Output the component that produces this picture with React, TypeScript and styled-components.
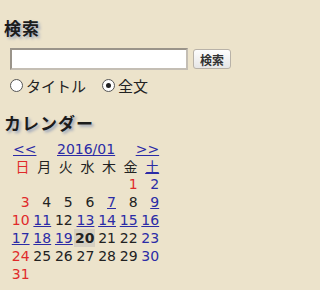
import React from 'react';
import styled, { createGlobalStyle } from 'styled-components';

const GlobalStyle = createGlobalStyle`
  html, body {
    margin: 0;
    padding: 0;
    background: #ece3cb;
  }
  body {
    font-family: "DejaVu Sans", "Noto Sans CJK JP", sans-serif;
    color: #222;
  }
`;

const Page = styled.div`
  width: 320px;
  height: 290px;
  padding: 16px 0 0 4px;
  box-sizing: border-box;
  background: #ece3cb;
`;

const Heading = styled.h2`
  margin: 0;
  font-family: "Noto Sans CJK JP", sans-serif;
  font-size: 17px;
  font-weight: bold;
  line-height: 24px;
  color: #1c1c1c;
  letter-spacing: 1px;
  text-shadow: 2px 2px 3px #9aa3b8;
`;

const SearchForm = styled.form`
  display: flex;
  flex-direction: column;
  padding: 8px 0 0 6px;
`;

const InputRow = styled.div`
  display: flex;
  align-items: center;
  gap: 5px;
`;

const TextInput = styled.input`
  width: 178px;
  height: 22px;
  box-sizing: border-box;
  border: 2px solid #9a948a;
  border-right-color: #c4beb4;
  border-bottom-color: #c4beb4;
  background: #fff;
  padding: 0 3px;
  margin: 0;
`;

const SearchButton = styled.button`
  height: 20px;
  width: 38px;
  padding: 0;
  margin: 0;
  border: 1px solid #b8b2a8;
  border-radius: 3px;
  background: linear-gradient(#fdfdfd, #e6e6e6);
  font-family: "Noto Sans CJK JP", sans-serif;
  font-size: 12px;
  font-weight: bold;
  color: #333;
`;

const RadioRow = styled.div`
  display: flex;
  align-items: center;
  height: 24px;
  margin-top: 3px;
  font-family: "Noto Sans CJK JP", sans-serif;
  font-size: 15px;
  color: #222;
`;

const RadioLabel = styled.label<{ $gap?: number }>`
  display: flex;
  align-items: center;
  margin-right: ${(p) => p.$gap ?? 0}px;
`;

const Radio = styled.span<{ $checked?: boolean }>`
  width: 11px;
  height: 11px;
  border: 1px solid #555;
  border-radius: 50%;
  background: #fff;
  margin-right: 3px;
  display: flex;
  align-items: center;
  justify-content: center;
  &::after {
    content: '';
    width: 5px;
    height: 5px;
    border-radius: 50%;
    background: ${(p) => (p.$checked ? '#222' : 'transparent')};
  }
`;

const CalendarHeading = styled(Heading)`
  margin-top: 14px;
`;

const Calendar = styled.div`
  display: grid;
  grid-template-columns: repeat(7, 21.6px);
  padding: 6px 0 0 5px;
  font-size: 14px;
  line-height: 18px;
`;

const NavRow = styled.div`
  grid-column: 1 / 8;
  display: flex;
  justify-content: space-between;
  padding: 0 0 0 4px;
  line-height: 16px;
`;

const NavLink = styled.a<{ $shift?: number }>`
  color: #2b2ba6;
  text-decoration: underline;
  cursor: pointer;
  margin-right: ${(p) => p.$shift ?? 0}px;
`;

type Tone = 'sun' | 'sat' | 'plain';

const toneColor = (t: Tone) =>
  t === 'sun' ? '#e02a2a' : t === 'sat' ? '#2b2ba6' : '#222';

const DayName = styled.div<{ $tone: Tone }>`
  text-align: right;
  font-family: "Noto Sans CJK JP", sans-serif;
  font-size: 14px;
  color: ${(p) => toneColor(p.$tone)};
  text-decoration: ${(p) => (p.$tone === 'sat' ? 'underline' : 'none')};
  padding-right: 1px;
`;

const DateCell = styled.div<{ $tone: Tone; $link?: boolean; $today?: boolean }>`
  text-align: right;
  padding-right: 1px;
  color: ${(p) => (p.$link ? '#2b2ba6' : toneColor(p.$tone))};
  text-decoration: ${(p) => (p.$link ? 'underline' : 'none')};
  font-weight: ${(p) => (p.$today ? 'bold' : 'normal')};
  background: ${(p) => (p.$today ? '#d6d0c2' : 'transparent')};
`;

const dayNames: { label: string; tone: Tone }[] = [
  { label: '日', tone: 'sun' },
  { label: '月', tone: 'plain' },
  { label: '火', tone: 'plain' },
  { label: '水', tone: 'plain' },
  { label: '木', tone: 'plain' },
  { label: '金', tone: 'plain' },
  { label: '土', tone: 'sat' },
];

const linkedDays = [7, 9, 11, 13, 14, 15, 16, 17, 18, 19];
const holidays = [1];
const today = 20;

const App: React.FC = () => {
  const cells: React.ReactNode[] = [];
  const offset = 5; // Jan 1 2016 is a Friday
  for (let i = 0; i < offset; i++) cells.push(<DateCell key={`e${i}`} $tone="plain" />);
  for (let d = 1; d <= 31; d++) {
    const col = (offset + d - 1) % 7;
    const tone: Tone =
      col === 0 || holidays.includes(d) ? 'sun' : col === 6 ? 'sat' : 'plain';
    cells.push(
      <DateCell key={d} $tone={tone} $link={linkedDays.includes(d)} $today={d === today}>
        {d}
      </DateCell>
    );
  }

  return (
    <Page>
      <GlobalStyle />
      <Heading>検索</Heading>
      <SearchForm onSubmit={(e) => e.preventDefault()}>
        <InputRow>
          <TextInput type="text" />
          <SearchButton type="submit">検索</SearchButton>
        </InputRow>
        <RadioRow>
          <RadioLabel $gap={16}>
            <Radio />
            タイトル
          </RadioLabel>
          <RadioLabel>
            <Radio $checked />
            全文
          </RadioLabel>
        </RadioRow>
      </SearchForm>
      <CalendarHeading>カレンダー</CalendarHeading>
      <Calendar>
        <NavRow>
          <NavLink>&lt;&lt;</NavLink>
          <NavLink>2016/01</NavLink>
          <NavLink $shift={1}>&gt;&gt;</NavLink>
        </NavRow>
        {dayNames.map((n) => (
          <DayName key={n.label} $tone={n.tone}>
            {n.label}
          </DayName>
        ))}
        {cells}
      </Calendar>
    </Page>
  );
};

export default App;
